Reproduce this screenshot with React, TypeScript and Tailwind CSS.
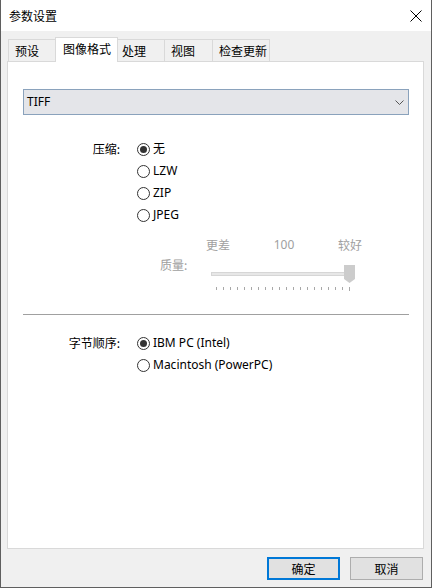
import React from "react";

function Radio({ checked }: { checked?: boolean }) {
  return (
    <span className="w-[13px] h-[13px] rounded-full border border-[#333333] bg-white flex items-center justify-center shrink-0">
      {checked ? <span className="w-[7px] h-[7px] rounded-full bg-[#333333]" /> : null}
    </span>
  );
}

function RadioRow({ label, checked }: { label: string; checked?: boolean }) {
  return (
    <div className="h-[22px] flex items-center">
      <Radio checked={checked} />
      <span className="ml-[3px] text-black">{label}</span>
    </div>
  );
}

export default function App() {
  const ticks = Array.from({ length: 20 }, (_, i) => 5.5 + i * 7);
  return (
    <div className="w-[432px] h-[588px] flex flex-col bg-[#f0f0f0] border-x border-b border-[#5f5f5f] text-[12px] leading-[16px] text-black font-['Noto_Sans','Noto_Sans_CJK_SC',sans-serif] overflow-hidden">
      {/* title bar */}
      <div className="h-[31px] bg-white flex items-center pl-[8px] shrink-0">
        <span className="font-['Noto_Sans_CJK_SC',sans-serif]">参数设置</span>
        <svg className="ml-auto mr-[9px]" width="12" height="12" viewBox="0 0 12 12">
          <path d="M0.5 0.5 L11.5 11.5 M11.5 0.5 L0.5 11.5" stroke="#000" strokeWidth="1" fill="none" />
        </svg>
      </div>

      {/* body */}
      <div className="pt-[6px] pl-[6px] pr-[7px] shrink-0">
        {/* tabs */}
        <div className="h-[24px] flex items-end ml-[1px] font-['Noto_Sans_CJK_SC',sans-serif]">
          <div className="w-[47px] h-[22px] border-l border-t border-[#d9d9d9] bg-[#f0f0f0] pl-[6px] pt-[3px]">预设</div>
          <div className="w-[63px] h-[25px] -mb-px relative z-10 border-l border-t border-r border-[#d9d9d9] bg-white pl-[7px] pt-[3px]">图像格式</div>
          <div className="w-[46px] h-[22px] border-t border-[#d9d9d9] bg-[#f0f0f0] pl-[4px] pt-[3px]">处理</div>
          <div className="w-[48px] h-[22px] border-l border-t border-[#d9d9d9] bg-[#f0f0f0] pl-[6px] pt-[3px]">视图</div>
          <div className="w-[58px] h-[22px] border-l border-t border-r border-[#d9d9d9] bg-[#f0f0f0] pl-[6px] pt-[3px]">检查更新</div>
        </div>

        {/* panel */}
        <div className="h-[488px] border border-[#d9d9d9] bg-white flex flex-col">
          {/* dropdown */}
          <div className="mt-[27px] ml-[15px] mr-[14px] h-[26px] border border-[#8aa2bc] bg-[#e4e5e9] flex items-center justify-between pl-[3px] pr-[4px]">
            <span>TIFF</span>
            <svg width="9" height="5" viewBox="0 0 9 5">
              <polyline points="0.5,0.5 4.5,4.5 8.5,0.5" stroke="#555" strokeWidth="1" fill="none" />
            </svg>
          </div>

          {/* compression */}
          <div className="mt-[23px] flex">
            <div className="w-[112px] h-[22px] flex items-center justify-end font-['Noto_Sans_CJK_SC',sans-serif]">压缩:</div>
            <div className="ml-[17px] flex flex-col">
              <RadioRow label="无" checked />
              <RadioRow label="LZW" />
              <RadioRow label="ZIP" />
              <RadioRow label="JPEG" />
            </div>
          </div>

          {/* quality slider */}
          <div className="mt-[11px] ml-[198px] w-[156px] h-[16px] flex items-center justify-between text-[#a0a0a0]">
            <span className="font-['Noto_Sans_CJK_SC',sans-serif]">更差</span>
            <span>100</span>
            <span className="font-['Noto_Sans_CJK_SC',sans-serif]">较好</span>
          </div>
          <div className="mt-[3px] flex">
            <div className="ml-[152px] h-[18px] flex items-center text-[#a0a0a0] font-['Noto_Sans_CJK_SC',sans-serif]">质量:</div>
            <div className="ml-[24px] relative w-[145px] h-[36px]">
              <div className="absolute left-0 top-[16px] w-[140px] h-[4px] bg-[#e7e7e7] border border-[#d6d6d6]" />
              <svg className="absolute left-[133px] top-[9px]" width="11" height="18" viewBox="0 0 11 18">
                <polygon points="0,0 11,0 11,14 5.5,18 0,14" fill="#cccccc" />
              </svg>
              <svg className="absolute left-0 top-[31px]" width="145" height="4" viewBox="0 0 145 4">
                {ticks.map((x, i) => (
                  <line key={i} x1={x} y1={0} x2={x} y2={i === ticks.length - 1 ? 4 : 3} stroke="#a8a8a8" strokeWidth="1" />
                ))}
              </svg>
            </div>
          </div>

          {/* separator */}
          <div className="mt-[22px] ml-[15px] mr-[14px] h-px bg-[#a0a0a0]" />

          {/* byte order */}
          <div className="mt-[17px] flex">
            <div className="w-[112px] h-[22px] flex items-center justify-end font-['Noto_Sans_CJK_SC',sans-serif]">字节顺序:</div>
            <div className="ml-[17px] flex flex-col">
              <RadioRow label="IBM PC (Intel)" checked />
              <RadioRow label="Macintosh (PowerPC)" />
            </div>
          </div>
        </div>
      </div>

      {/* buttons */}
      <div className="flex-1 flex justify-end items-start pt-[8px] pr-[8px] gap-[10px] font-['Noto_Sans_CJK_SC',sans-serif]">
        <div className="w-[73px] h-[23px] border-2 border-[#0078d7] bg-[#e1e1e1] flex items-center justify-center">确定</div>
        <div className="w-[73px] h-[23px] border border-[#adadad] bg-[#e1e1e1] flex items-center justify-center">取消</div>
      </div>
    </div>
  );
}
